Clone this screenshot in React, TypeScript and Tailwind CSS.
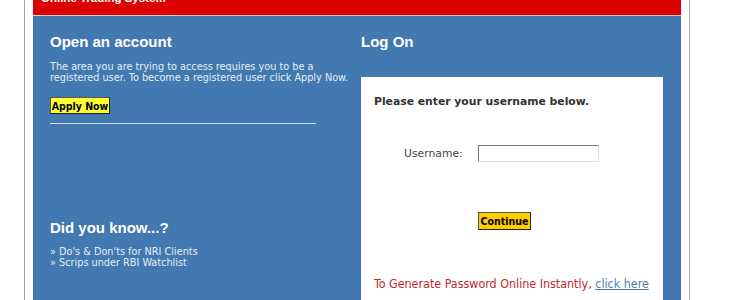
import React from "react";

export default function App() {
  const cond = { fontFamily: '"DejaVu Sans Condensed", "DejaVu Sans", Tahoma, sans-serif' };
  const wide = { fontFamily: '"DejaVu Sans", Verdana, sans-serif' };
  const head = { fontFamily: '"Liberation Sans", Arial, sans-serif' };
  return (
    <div className="w-[730px] h-[300px] overflow-hidden bg-white">
      <div className="ml-[24px] w-[666px] h-[300px] border-x border-[#a0a0a0] px-[8px]">
        <div className="h-[16px] overflow-hidden bg-[#dd0000] border-b border-[#f3c7c7] relative">
          <div
            className="absolute left-[8px] top-[-9px] text-white text-[11.5px] font-bold leading-[14px] whitespace-nowrap"
            style={head}
          >
            Online Trading System
          </div>
        </div>
        <div className="bg-[#4279b0] h-[290px] flex pl-[17px] pr-[17px]">
          <div className="w-[311px] flex flex-col">
            <h1 className="mt-[17px] text-white text-[15px] font-bold leading-[18px]" style={head}>
              Open an account
            </h1>
            <p className="mt-[10px] text-[#e6edf5] text-[10.8px] leading-[11px] whitespace-nowrap" style={cond}>
              The area you are trying to access requires you to be a
              <br />
              registered user. To become a registered user click Apply Now.
            </p>
            <div className="mt-[14px] flex">
              <button
                className="w-[60px] h-[17px] bg-[#ffff33] border border-[#555] border-r-[#222] border-b-[#222] text-[10.5px] font-bold text-black leading-[14px] text-center"
                style={cond}
              >
                Apply Now
              </button>
            </div>
            <div className="mt-[9px] w-[266px] h-px bg-[#cfe0f0]" />
            <h2 className="mt-[95px] text-white text-[15px] font-bold leading-[18px]" style={head}>
              Did you know...?
            </h2>
            <ul className="mt-[9px] text-[#e6edf5] text-[10.8px] leading-[11px]" style={cond}>
              <li>» Do's &amp; Don'ts for NRI Clients</li>
              <li>» Scrips under RBI Watchlist</li>
            </ul>
          </div>
          <div className="flex-1 flex flex-col">
            <h2 className="mt-[17px] text-white text-[15px] font-bold leading-[18px]" style={head}>
              Log On
            </h2>
            <div className="mt-[26px] bg-white w-[302px] flex-1 pl-[13px] pt-[18px]">
              <p className="text-[#333] text-[10.8px] font-bold leading-[14px] whitespace-nowrap" style={wide}>
                Please enter your username below.
              </p>
              <div className="mt-[36px] flex items-center">
                <span className="ml-[30px] w-[74px] text-[#444] text-[10.8px] leading-[14px]" style={wide}>
                  Username:
                </span>
                <input
                  className="w-[121px] h-[17px] border border-[#7a7a7a] border-r-[#ddd] border-b-[#ddd] bg-white"
                  type="text"
                />
              </div>
              <div className="mt-[50px] ml-[104px] flex">
                <button
                  className="w-[53px] h-[18px] bg-[#ffcc00] border border-[#555] border-r-[#222] border-b-[#222] text-[10.5px] font-bold text-black leading-[14px] text-center"
                  style={cond}
                >
                  Continue
                </button>
              </div>
              <p className="mt-[47px] text-[#c0282d] text-[12.4px] leading-[14px] whitespace-nowrap" style={cond}>
                To Generate Password Online Instantly,{" "}
                <a className="text-[#4a7fb0] underline" href="#">
                  click here
                </a>
              </p>
            </div>
          </div>
        </div>
      </div>
    </div>
  );
}
